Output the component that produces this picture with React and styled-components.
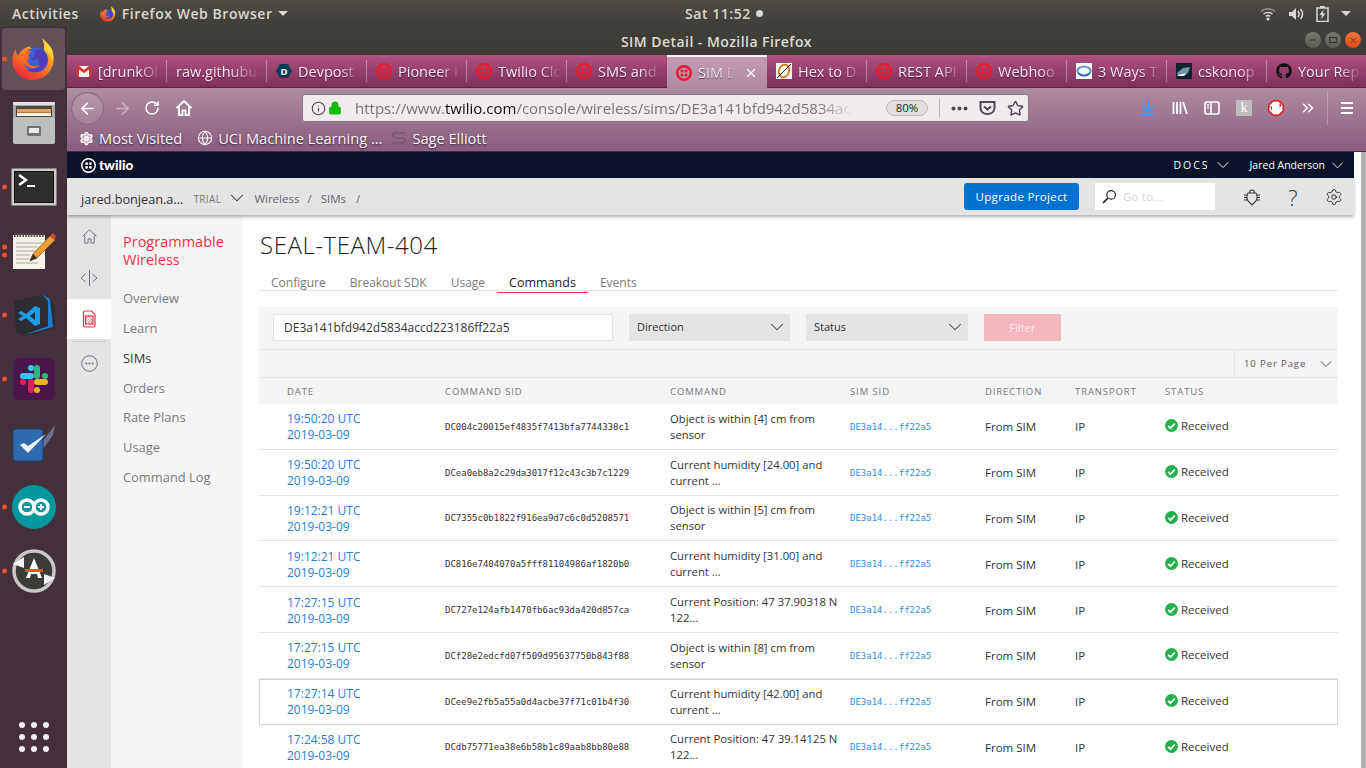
import styled, { createGlobalStyle } from "styled-components";
import { FaGithub } from "react-icons/fa";
import {
  ArrowLeft, ArrowRight, RotateCw, Info, Lock, Star, ChevronDown, Settings, Globe, X,
  ChevronsRight,
} from "lucide-react";

const GlobalStyle = createGlobalStyle`
  html, body { margin: 0; padding: 0; background: #43303a; overflow: hidden; }
  * { box-sizing: border-box; }
  body { font-family: "Open Sans", "Noto Sans", sans-serif; }
`;

const Screen = styled.div`
  width: 1366px;
  height: 768px;
  display: flex;
  flex-direction: column;
  overflow: hidden;
`;

/* ---- gnome top bar ---- */
const TopBar = styled.div`
  height: 27px;
  flex: none;
  display: flex;
  align-items: center;
  background: linear-gradient(#4e4c45, #3f3d38);
  color: #d8d8d2;
  font-size: 14px;
  font-weight: 600;
  letter-spacing: 0.55px;
`;
const TopLeft = styled.div`
  width: 685px;
  display: flex;
  align-items: center;
  padding-left: 12px;
`;
const AppName = styled.span`
  margin: 0 5px 0 6px;
`;
const Activities = styled.span`
  margin-right: 21px;
`;
const Caret = styled.span`
  width: 0;
  height: 0;
  border-left: 5px solid transparent;
  border-right: 5px solid transparent;
  border-top: 5px solid #d8d8d2;
`;
const ClockDot = styled.span`
  width: 7px;
  height: 7px;
  border-radius: 50%;
  background: #d8d8d2;
  margin-left: 5px;
`;
const TrayIcons = styled.div`
  margin-left: auto;
  display: flex;
  align-items: center;
  gap: 12px;
  padding-right: 15px;
`;

const Body = styled.div`
  flex: 1;
  min-height: 0;
  display: flex;
`;

/* ---- launcher ---- */
const Dock = styled.div`
  width: 67px;
  flex: none;
  display: flex;
  flex-direction: column;
  background: #44303a;
`;
const DockItem = styled.div`
  position: relative;
  height: 64px;
  display: flex;
  align-items: center;
  justify-content: center;
  &::before {
    content: "";
    position: absolute;
    inset: 1px 2px 1px 2px;
    border-radius: 4px;
    background: ${(p) => (p.$active ? "rgba(255,255,255,0.16)" : "transparent")};
  }
  & > svg { position: relative; }
`;
const RunDots = styled.div`
  position: absolute;
  left: 2px;
  top: 50%;
  transform: translateY(-50%);
  display: flex;
  flex-direction: column;
  gap: 3px;
`;
const RunDot = styled.span`
  width: 5px;
  height: 5px;
  border-radius: 50%;
  background: #e95420;
`;
const AppGrid = styled.div`
  margin-top: auto;
  margin-bottom: 16px;
  align-self: center;
  display: grid;
  grid-template-columns: repeat(3, 6px);
  gap: 6px;
`;
const AppGridDot = styled.span`
  width: 6px;
  height: 6px;
  border-radius: 50%;
  background: #eeeeee;
`;

/* ---- firefox chrome ---- */
const Browser = styled.div`
  flex: 1;
  min-width: 0;
  display: flex;
  flex-direction: column;
`;
const TitleBar = styled.div`
  position: relative;
  height: 28px;
  flex: none;
  display: flex;
  align-items: center;
  justify-content: center;
  background: linear-gradient(#403f3a, #3c3b36);
  color: #dcdcd5;
  font-size: 14px;
  font-weight: 600;
  letter-spacing: 0.45px;
`;
const WindowButtons = styled.div`
  position: absolute;
  right: 5px;
  top: 5px;
  display: flex;
  gap: 4px;
`;
const WindowButton = styled.span`
  width: 16px;
  height: 16px;
  border-radius: 50%;
  display: flex;
  align-items: center;
  justify-content: center;
  background: ${(p) => (p.$close ? "linear-gradient(#f0703a, #d94e17)" : "linear-gradient(#7a7970, #5b5a53)")};
`;
const TabStrip = styled.div`
  height: 33px;
  flex: none;
  display: flex;
  background: linear-gradient(#b1517f, #7d2f5a);
  border-bottom: 1px solid #5b2443;
`;
const Tab = styled.div`
  position: relative;
  width: 100px;
  flex: none;
  height: ${(p) => (p.$active ? "33px" : "32px")};
  display: flex;
  align-items: center;
  gap: 6px;
  padding-left: 9px;
  color: #f4e9ef;
  font-size: 14.5px;
  text-shadow: 0 1px 1px rgba(50, 10, 30, 0.7);
  background: ${(p) => (p.$active ? "linear-gradient(#c49ab3, #b08ba0)" : "transparent")};
  border-top: ${(p) => (p.$active ? "2px solid #f8eef3" : "0")};
  & > svg { flex: none; }
  &::after {
    content: "";
    position: absolute;
    right: 0;
    top: 5px;
    bottom: 5px;
    width: 1px;
    background: ${(p) => (p.$divider ? "rgba(255,255,255,0.35)" : "transparent")};
  }
`;
const TabLabel = styled.span`
  flex: 1;
  overflow: hidden;
  white-space: nowrap;
  -webkit-mask-image: linear-gradient(to right, #000 60%, transparent 92%);
  mask-image: linear-gradient(to right, #000 60%, transparent 92%);
`;
const TabClose = styled.span`
  display: flex;
  margin-right: 9px;
`;
const Chrome = styled.div`
  flex: none;
  background: linear-gradient(#b08b9f, #8a5c7d);
`;
const NavBar = styled.div`
  height: 40px;
  display: flex;
  align-items: center;
  color: #fff;
`;
const BackCircle = styled.span`
  width: 33px;
  height: 33px;
  margin: 0 2px 0 4px;
  border-radius: 50%;
  border: 1px solid #7f6577;
  display: flex;
  align-items: center;
  justify-content: center;
  background: rgba(255, 255, 255, 0.12);
`;
const NavSlot = styled.span`
  width: ${(p) => p.$w || 32}px;
  display: flex;
  justify-content: center;
  opacity: ${(p) => (p.$dim ? 0.45 : 1)};
`;
const UrlBar = styled.div`
  width: 727px;
  height: 28px;
  margin-left: 100px;
  display: flex;
  align-items: center;
  background: #efebee;
  border: 1px solid #8d7686;
  border-radius: 3px;
  color: #444;
`;
const UrlIcons = styled.span`
  display: flex;
  align-items: center;
  gap: 2px;
  padding-left: 8px;
  width: 52px;
  flex: none;
`;
const UrlText = styled.div`
  width: 527px;
  font-size: 15px;
  color: #777;
  white-space: nowrap;
  overflow: hidden;
  -webkit-mask-image: linear-gradient(to right, #000 88%, transparent 94.5%);
  mask-image: linear-gradient(to right, #000 88%, transparent 94.5%);
  & b { font-weight: 400; color: #111; }
`;
const ZoomPill = styled.span`
  width: 42px;
  height: 16px;
  margin-left: 4px;
  border: 1px solid #bdb8bb;
  background: #e3dfe1;
  border-radius: 8px;
  font-size: 11.5px;
  line-height: 14px;
  text-align: center;
  color: #222;
`;
const UrlSep = styled.span`
  width: 1px;
  height: 20px;
  margin: 0 11px;
  background: #bdb4ba;
`;
const UrlActions = styled.span`
  display: flex;
  align-items: center;
  gap: 11px;
  color: #4a4a4f;
`;
const NavRight = styled.div`
  margin-left: auto;
  display: flex;
  align-items: center;
  padding-right: 3px;
  color: #fff;
`;
const ToolSlot = styled.span`
  width: 32px;
  display: flex;
  justify-content: center;
`;
const ToolSep = styled.span`
  width: 1px;
  height: 33px;
  margin: 0 3px;
  background: rgba(255, 255, 255, 0.25);
`;
const BookmarkBar = styled.div`
  height: 23px;
  display: flex;
  align-items: center;
  padding: 0 0 3px 12px;
  color: #fbf6f9;
  font-size: 14.6px;
  text-shadow: 0 1px 2px rgba(40, 10, 30, 0.8);
`;
const Bookmark = styled.span`
  display: flex;
  align-items: center;
  gap: 5px;
  margin-left: ${(p) => p.$gap || 0}px;
  white-space: nowrap;
`;

/* ---- page ---- */
const Viewport = styled.div`
  flex: 1;
  min-height: 0;
  display: flex;
  border-top: 1px solid #5b2443;
`;
const Page = styled.div`
  flex: 1;
  min-width: 0;
  display: flex;
  flex-direction: column;
  background: #fff;
`;
const Scrollbar = styled.div`
  width: 12px;
  flex: none;
  background: #fff;
  border-right: 5px solid #b0b0b0;
`;
const TwilioBar = styled.div`
  height: 26px;
  flex: none;
  display: flex;
  align-items: center;
  padding: 0 7px 0 14px;
  background: #0d122b;
  color: #fff;
`;
const TwilioName = styled.span`
  font-family: "Lato", sans-serif;
  font-weight: 900;
  font-size: 13.5px;
  margin-left: 3px;
`;
const DocsLink = styled.span`
  margin-left: auto;
  font-size: 10.5px;
  letter-spacing: 2px;
  display: flex;
  align-items: center;
  gap: 3px;
`;
const UserLink = styled.span`
  margin-left: 17px;
  font-size: 10.5px;
  display: flex;
  align-items: center;
  gap: 3px;
`;
const SubBar = styled.div`
  position: relative;
  z-index: 1;
  height: 37px;
  flex: none;
  display: flex;
  align-items: center;
  padding-left: 14px;
  background: #e4e4e4;
  box-shadow: 0 2px 3px rgba(0, 0, 0, 0.3);
`;
const Account = styled.span`
  margin-top: 4px;
  font-size: 12.7px;
  color: #333;
`;
const Trial = styled.span`
  margin: 4px 5px 0 10px;
  font-size: 10px;
  letter-spacing: 0.4px;
  color: #777;
`;
const Crumb = styled.span`
  margin-top: 4px;
  font-size: 11.5px;
  color: #66666f;
  margin-left: ${(p) => p.$gap || 0}px;
`;
const TrialChevron = styled.span`
  display: flex;
  margin-top: 2px;
`;
const UpgradeButton = styled.button`
  margin-left: auto;
  width: 115px;
  height: 27px;
  border: 0;
  border-radius: 3px;
  background: #0071ce;
  color: #fff;
  font-family: inherit;
  font-size: 11.5px;
  letter-spacing: 0.35px;
`;
const GoTo = styled.div`
  width: 120px;
  height: 27px;
  margin-left: 16px;
  display: flex;
  align-items: center;
  gap: 6px;
  padding-left: 7px;
  background: #fff;
  color: #d4d4d4;
  font-size: 11.5px;
  letter-spacing: 0.2px;
`;
const SubIcons = styled.div`
  width: 139px;
  display: flex;
  align-items: center;
  justify-content: space-between;
  padding: 0 11px 0 28px;
  color: #333;
`;
const QuestionMark = styled.span`
  font-size: 22px;
  font-weight: 300;
  line-height: 22px;
  color: #333;
`;
const PageBody = styled.div`
  flex: 1;
  min-height: 0;
  display: flex;
`;
const Rail = styled.div`
  width: 44px;
  flex: none;
  background: #e4e4e4;
  display: flex;
  flex-direction: column;
  align-items: stretch;
`;
const RailItem = styled.div`
  height: ${(p) => p.$h || 40}px;
  display: flex;
  align-items: center;
  justify-content: center;
  color: #6c7080;
  background: ${(p) => (p.$active ? "#fff" : "transparent")};
`;
const RailLine = styled.div`
  height: 1px;
  margin: 2px 5px 0;
  background: #c8c8c8;
`;
const SideNav = styled.div`
  width: 132px;
  flex: none;
  background: #f5f5f5;
  padding: 18px 12px 0;
`;
const SideTitle = styled.div`
  font-size: 14.5px;
  line-height: 18px;
  color: #f22f46;
  margin-bottom: 15px;
`;
const SideItem = styled.div`
  height: 29.85px;
  line-height: 29.85px;
  font-size: 12.9px;
  color: ${(p) => (p.$current ? "#333" : "#7a7a7a")};
  white-space: nowrap;
`;
const Main = styled.div`
  flex: 1;
  min-width: 0;
  padding: 0 16px;
  overflow: hidden;
`;
const Heading = styled.h1`
  margin: 0;
  padding: 15px 0 0 1px;
  height: 59px;
  font-size: 24px;
  line-height: 30px;
  font-weight: 300;
  letter-spacing: 0.55px;
  color: #222;
`;
const TabRow = styled.div`
  display: flex;
  height: 17px;
  border-bottom: 1px solid #e4e4e4;
`;
const PageTab = styled.span`
  position: relative;
  height: 18px;
  padding: 0 12px;
  font-size: ${(p) => (p.$active ? "12.5px" : "12px")};
  line-height: 18px;
  color: ${(p) => (p.$active ? "#222" : "#7a7a7a")};
  &::after {
    content: "";
    display: ${(p) => (p.$active ? "block" : "none")};
    position: absolute;
    left: 0;
    right: 0;
    bottom: -1px;
    height: 1px;
    background: #f22f46;
  }
`;
const FilterPanel = styled.div`
  margin-top: 16px;
  height: 43px;
  display: flex;
  align-items: flex-start;
  gap: 16px;
  padding: 7px 14px 0;
  background: #f5f5f5;
  border-bottom: 1px solid #e4e4e4;
`;
const SidInput = styled.div`
  width: 340px;
  height: 27px;
  padding-left: 10px;
  background: #fff;
  border: 1px solid #e4e4e4;
  font-size: 12px;
  line-height: 25px;
  color: #333;
`;
const Select = styled.div`
  width: ${(p) => p.$w}px;
  height: 27px;
  display: flex;
  align-items: center;
  justify-content: space-between;
  padding: 0 2px 2px 8px;
  background: #e4e4e4;
  font-size: 11px;
  color: #333;
`;
const FilterButton = styled.div`
  width: 77px;
  height: 27px;
  background: #f5b7bf;
  color: #fce9eb;
  font-size: 11px;
  line-height: 27px;
  text-align: center;
`;
const PagerRow = styled.div`
  height: 28px;
  display: flex;
  justify-content: flex-end;
  background: #f5f5f5;
  border-bottom: 1px solid #e4e4e4;
`;
const PerPage = styled.div`
  width: 104px;
  display: flex;
  align-items: center;
  justify-content: space-between;
  padding: 0 2px 0 9px;
  border-left: 1px solid #e4e4e4;
  font-size: 9.5px;
  letter-spacing: 0.9px;
  color: #555;
`;
const columns = "158px 225px 180px 135px 90px 90px 1fr";
const HeadRow = styled.div`
  height: 26px;
  display: grid;
  grid-template-columns: ${columns};
  align-items: center;
  padding-left: 28px;
  background: #f5f5f5;
  font-size: 9.5px;
  letter-spacing: 0.9px;
  color: #777;
`;
const Row = styled.div`
  height: 45.8px;
  display: grid;
  grid-template-columns: ${columns};
  align-items: center;
  padding-left: 28px;
  box-shadow: ${(p) => (p.$focus ? "inset 0 0 0 1px #d4d4d4" : "inset 0 -1px 0 #e4e4e4")};
  font-size: 11.5px;
  color: #333;
`;
const DateCell = styled.div`
  margin-top: 1px;
  font-size: 12px;
  line-height: 16px;
  color: #1f80d8;
`;
const SidCell = styled.div`
  font-family: "DejaVu Sans Mono", monospace;
  font-size: 9px;
  color: ${(p) => (p.$link ? "#2f8fdf" : "#333")};
`;
const CommandCell = styled.div`
  width: 176px;
  font-size: 11.3px;
  line-height: 16px;
`;
const StatusCell = styled.div`
  display: flex;
  align-items: center;
  gap: 3px;
  margin-top: -2px;
`;

/* ---- drawings ---- */
const Firefox = ({ size }) => (
  <svg width={size} height={size} viewBox="0 0 48 48">
    <defs>
      <linearGradient id="ffBase" x1="0.8" y1="0" x2="0.2" y2="1">
        <stop offset="0" stopColor="#ffd43a" />
        <stop offset="0.45" stopColor="#ff8a1f" />
        <stop offset="1" stopColor="#e8203a" />
      </linearGradient>
    </defs>
    <path d="M33 1c3 4 9 8 11 14 4 11 0 23-10 29-11 6-25 3-31-8C-1 28 0 20 4 13c0 4 1 6 3 7 2-5 7-9 13-10-1 1 0 2 2 2 4 0 10 2 13 7 1-6 0-13-2-18z" fill="url(#ffBase)" />
    <circle cx="26" cy="25" r="13.5" fill="#3f5fd6" />
    <path d="M33 14c6 5 8 14 2 20-5 5-13 6-20 2 6 0 11-1 14-5 2-3 1-6-2-7-1 1-5 2-6 0 2-2 5-3 4-6-1-1 0-3 1-4 3-1 5-1 7 0z" fill="#5a2ba8" opacity="0.65" />
    <path d="M10 20c1 6 3 10 8 13 5 2 10 1 13-2-4 2-9 1-12-1-3-3-2-6 0-7-2-2-1-5 3-8-5 0-10 2-12 5z" fill="#ff6a1f" />
    <path d="M33 1c3 4 9 8 11 14 1 4 1 8 0 11-1-6-4-9-9-12 1-4 0-9-2-13z" fill="#ffd43a" />
  </svg>
);
const Files = () => (
  <svg width="44" height="44" viewBox="0 0 44 44">
    <rect x="1" y="1" width="42" height="42" rx="3" fill="#a9abab" />
    <rect x="1" y="1" width="42" height="3" rx="1" fill="#e2e2e2" />
    <rect x="4" y="5" width="36" height="11" fill="#4a4744" />
    <rect x="5" y="8" width="34" height="3" fill="#e8a25a" />
    <rect x="5" y="11" width="34" height="1" fill="#c9753c" />
    <rect x="5" y="12" width="34" height="3" fill="#f4f0e4" />
    <rect x="1" y="16" width="42" height="27" rx="2" fill="#bcbebe" />
    <rect x="15" y="25" width="14" height="10" rx="1.5" fill="#6f7272" />
    <rect x="17" y="27" width="10" height="5" fill="#e9e9e9" />
  </svg>
);
const TerminalIcon = () => (
  <svg width="46" height="38" viewBox="0 0 46 38">
    <rect x="0.5" y="0.5" width="45" height="37" fill="#c9cac5" />
    <rect x="3.5" y="3.5" width="39" height="31" fill="#2d2d2b" stroke="#111" />
    <path d="M8 7l7 5-7 5" fill="none" stroke="#fff" strokeWidth="2.4" />
    <rect x="16" y="17" width="8" height="2" fill="#fff" />
  </svg>
);
const EditorIcon = () => (
  <svg width="46" height="38" viewBox="0 0 46 38">
    <rect x="2" y="3" width="32" height="34" fill="#f5f3ea" />
    <path d="M3 3h31" stroke="#55534c" strokeWidth="4" strokeDasharray="1.6 1.2" />
    <path d="M5 11h26M5 15h22M5 19h24M5 23h14M5 27h16M5 31h22" stroke="#aaa8a0" strokeWidth="1" />
    <path d="M19 29l3-7L39 4l5 4-18 18z" fill="#f0a030" stroke="#8a5a20" strokeWidth="0.8" />
    <path d="M39 4l3-3 3 3-1 4z" fill="#d8473a" />
    <path d="M19 29l3-7 4 4z" fill="#3a3020" />
  </svg>
);
const VsCode = () => (
  <svg width="44" height="44" viewBox="0 0 44 44">
    <path d="M2 8l32-7 9 12v22l-30 8-9-3z" fill="#2c2c32" />
    <path d="M30 1l8 5 3 28-29 8 24-9V8z" fill="#1a7fd0" />
    <path d="M6 20l3-2 5 3 9-8 5 2v16l-5 2-9-8-5 3-3-2 5-3zm17-1l-5 4 5 4z" fill="#1f9ce8" fillRule="evenodd" />
  </svg>
);
const SlackIcon = () => (
  <svg width="42" height="42" viewBox="0 0 42 42">
    <rect width="42" height="42" rx="6" fill="#4a154b" />
    <g strokeWidth="6" strokeLinecap="round" fill="none">
      <path d="M10 18h8M18 10h.01" stroke="#36c5f0" />
      <path d="M24 10v8M32 18h.01" stroke="#2eb67d" />
      <path d="M32 24h-8M24 32h.01" stroke="#ecb22e" />
      <path d="M18 32v-8M10 24h.01" stroke="#e01e5a" />
    </g>
  </svg>
);
const TasksIcon = () => (
  <svg width="46" height="44" viewBox="0 0 46 44">
    <path d="M30 22L44 4l-2 10-10 14z" fill="#7f9cc8" opacity="0.6" />
    <rect x="2" y="8" width="30" height="32" rx="3" fill="#2f6bb0" stroke="#1c3f70" />
    <path d="M9 24l8 8 18-19-18 12-4-3z" fill="#f2f2f2" />
  </svg>
);
const ArduinoIcon = () => (
  <svg width="44" height="44" viewBox="0 0 44 44">
    <circle cx="22" cy="22" r="22" fill="#00979d" />
    <circle cx="15" cy="22" r="7" fill="none" stroke="#fff" strokeWidth="3.4" />
    <circle cx="29" cy="22" r="7" fill="none" stroke="#fff" strokeWidth="3.4" />
    <path d="M12 22h6M26 22h6M29 19v6" stroke="#fff" strokeWidth="1.8" />
  </svg>
);
const UpdaterIcon = () => (
  <svg width="44" height="44" viewBox="0 0 44 44">
    <circle cx="22" cy="22" r="20" fill="#3c3b37" stroke="#c8c8c8" strokeWidth="3.5" />
    <path d="M1 15l11-7v11zM43 29l-11 7V25z" fill="#f4f4f4" />
    <path d="M22 9l-8 20h4l1-4h6l1 4h4z" fill="#fff" />
    <rect x="13" y="20" width="18" height="3" fill="#e95420" />
  </svg>
);
const TwilioMark = ({ size = 16, color = "#e8192e", width = 2.4 }) => (
  <svg width={size} height={size} viewBox="0 0 16 16">
    <circle cx="8" cy="8" r={8 - width / 2} fill="none" stroke={color} strokeWidth={width} />
    <circle cx="6" cy="6" r="1.5" fill={color} />
    <circle cx="10" cy="6" r="1.5" fill={color} />
    <circle cx="6" cy="10" r="1.5" fill={color} />
    <circle cx="10" cy="10" r="1.5" fill={color} />
  </svg>
);
const GmailMark = () => (
  <svg width="16" height="16" viewBox="0 0 16 16">
    <rect x="1" y="3" width="14" height="11" fill="#f1ece8" />
    <path d="M1 3h2l5 4 5-4h2v11h-2V6.5L8 10 3 6.5V14H1z" fill="#d6382c" />
  </svg>
);
const DevpostMark = () => (
  <svg width="16" height="16" viewBox="0 0 16 16">
    <path d="M4 1h8l4 7-4 7H4L0 8z" fill="#003e54" />
    <text x="8" y="11.5" fontSize="9.5" fontWeight="700" fontFamily="Open Sans" textAnchor="middle" fill="#fff">D</text>
  </svg>
);
const HexMark = () => (
  <svg width="16" height="16" viewBox="0 0 16 16">
    <rect width="16" height="16" fill="#f7f7f2" />
    <ellipse cx="8" cy="8" rx="5" ry="6.5" transform="rotate(20 8 8)" fill="none" stroke="#e8701a" strokeWidth="1.8" />
    <path d="M1 15L15 1" stroke="#222" strokeWidth="1" />
  </svg>
);
const WaysMark = () => (
  <svg width="16" height="16" viewBox="0 0 16 16">
    <rect width="16" height="16" fill="#f4f7fb" />
    <ellipse cx="8" cy="8" rx="6.5" ry="4.5" fill="none" stroke="#6f97d4" strokeWidth="2.2" />
    <path d="M2 10c4 4 9 3 12 0" fill="none" stroke="#2f5fa8" strokeWidth="1.4" />
  </svg>
);
const PhotoMark = () => (
  <svg width="16" height="16" viewBox="0 0 16 16">
    <rect width="16" height="16" fill="#0f2230" />
    <path d="M1 10l6-5 7-1-2 6-8 3z" fill="#6f93ad" />
    <path d="M1 12l10-2-3 3H2z" fill="#e8eef2" />
  </svg>
);
const Wifi = () => (
  <svg width="16" height="14" viewBox="0 0 16 14" fill="none" stroke="#d8d8d2" strokeWidth="1.6">
    <path d="M1 4.5c4-3.5 10-3.5 14 0" opacity="0.5" />
    <path d="M3.5 7c2.5-2 6.5-2 9 0" />
    <path d="M5.8 9.3c1.3-1 3.1-1 4.4 0" />
    <circle cx="8" cy="12" r="1.5" fill="#d8d8d2" stroke="none" />
  </svg>
);
const Sound = () => (
  <svg width="16" height="14" viewBox="0 0 16 14">
    <path d="M1 5h3l4-4v12l-4-4H1z" fill="#d8d8d2" />
    <path d="M10 4c1.5 2 1.5 4 0 6M12.5 2c2.5 3 2.5 7 0 10" fill="none" stroke="#d8d8d2" strokeWidth="1.5" />
  </svg>
);
const Battery = () => (
  <svg width="13" height="16" viewBox="0 0 13 16">
    <rect x="4" y="0" width="5" height="2" fill="#d8d8d2" />
    <rect x="1" y="2" width="11" height="13.5" fill="none" stroke="#d8d8d2" strokeWidth="1.5" />
    <path d="M7.5 3.5L3.5 9h2.5l-1 4.5L9.5 7.5H7z" fill="#d8d8d2" />
  </svg>
);
const HomeOutline = ({ color = "#fff", size = 18, weight = 1.8 }) => (
  <svg width={size} height={size} viewBox="0 0 18 18" fill="none" stroke={color} strokeWidth={weight}>
    <path d="M1.5 9L9 2l7.5 7M4 7.5V16h3.5v-4.5h3V16H14V7.5" />
  </svg>
);
const Pocket = () => (
  <svg width="17" height="16" viewBox="0 0 17 16" fill="none" stroke="#4a4a4f" strokeWidth="2">
    <path d="M1.5 2h14v6c0 3.5-3 6-7 6s-7-2.5-7-6z" />
    <path d="M5 6.5l3.5 3 3.5-3" />
  </svg>
);
const DownloadArrow = () => (
  <svg width="14" height="16" viewBox="0 0 14 16" fill="none" stroke="#3d9bff" strokeWidth="2">
    <path d="M7 0v11M1.5 6L7 11.5 12.5 6M0 15h14" />
  </svg>
);
const Library = () => (
  <svg width="16" height="16" viewBox="0 0 16 16" stroke="#fff" strokeWidth="1.8">
    <path d="M1.5 2v12M5 2v12M8.5 2v12M11 2l4 12" />
  </svg>
);
const SidebarIcon = () => (
  <svg width="16" height="14" viewBox="0 0 16 14" fill="none" stroke="#fff" strokeWidth="1.6">
    <rect x="1" y="1" width="14" height="12" rx="2" />
    <path d="M7 1v12M3 4h2M3 6.5h2" />
  </svg>
);
const KTile = styled.span`
  width: 16px;
  height: 16px;
  border-radius: 1px;
  background: #c0bcbe;
  color: #fff;
  font-family: "Liberation Serif", serif;
  font-size: 14px;
  line-height: 15px;
  text-align: center;
`;
const StopHand = () => (
  <svg width="16" height="16" viewBox="0 0 16 16">
    <path d="M5 0h6l5 5v6l-5 5H5l-5-5V5z" fill="#e01414" />
    <path d="M5.5 1.5h5l4 4v5l-4 4h-5l-4-4v-5z" fill="#fff" />
    <path d="M11.5 3l2 2.500-2 2zM2 6l2 1v4z" fill="#e01414" />
  </svg>
);
const Burger = () => (
  <svg width="14" height="12" viewBox="0 0 14 12" stroke="#fff" strokeWidth="2">
    <path d="M1 1h12M1 6h12M1 11h12" />
  </svg>
);
const SageMark = () => (
  <svg width="16" height="12" viewBox="0 0 16 12" fill="none" stroke="#6f5566" strokeWidth="1.2">
    <path d="M15 1H4L1 3l3 3h8l3 3-3 2H1" />
  </svg>
);
const Chevron = ({ size = 16, color = "#444" }) => <ChevronDown size={size} color={color} strokeWidth={1.1} />;
const BugIcon = () => (
  <svg width="18" height="18" viewBox="0 0 18 18" fill="none" stroke="#333" strokeWidth="1.1">
    <path d="M5 5h8c1.5 2 1.5 6 0 8l-4 4-4-4c-1.5-2-1.5-6 0-8zM6.5 5c0-4 5-4 5 0M1 7h3M14 7h3M1 9.5h3M14 9.5h3M1 12h3M14 12h3" />
  </svg>
);
const Loupe = () => (
  <svg width="15" height="15" viewBox="0 0 14 14" fill="none" stroke="#222" strokeWidth="1.1">
    <circle cx="8.5" cy="5.5" r="4" />
    <path d="M5.5 8.5L1 13" strokeWidth="1.5" />
  </svg>
);
const CodeIcon = () => (
  <svg width="18" height="18" viewBox="0 0 18 18" fill="none" stroke="#6c7080" strokeWidth="1">
    <path d="M5.5 5L1 9l4.5 4M12.5 5L17 9l-4.5 4M9.5 1v16" />
  </svg>
);
const SimIcon = () => (
  <svg width="14" height="18" viewBox="0 0 14 18" fill="none" stroke="#f22f46" strokeWidth="1.2">
    <path d="M3 1h6.5L13 4.5V15.500a1.500 1.500 0 0 1-1.500 1.500h-8.500A1.500 1.500 0 0 1 1.500 15.500V2.500A1.500 1.500 0 0 1 3 1z" />
    <rect x="3.5" y="6" width="7.5" height="8" />
    <path d="M3.5 6l7.5 8M3.5 9l5 5M6.5 6l4.500 5" strokeWidth="0.8" />
  </svg>
);
const MoreIcon = () => (
  <svg width="17" height="17" viewBox="0 0 17 17" fill="none" stroke="#6c7080" strokeWidth="1">
    <circle cx="8.5" cy="8.5" r="7.8" />
    <circle cx="5.3" cy="8.5" r="1" fill="#6c7080" stroke="none" />
    <circle cx="8.5" cy="8.5" r="1" fill="#6c7080" stroke="none" />
    <circle cx="11.7" cy="8.5" r="1" fill="#6c7080" stroke="none" />
  </svg>
);
const CheckBadge = () => (
  <svg width="13" height="13" viewBox="0 0 13 13">
    <circle cx="6.5" cy="6.5" r="6.5" fill="#23b14d" />
    <path d="M3.2 6.8l2.3 2.3 4.3-4.6" fill="none" stroke="#fff" strokeWidth="1.8" />
  </svg>
);

const dockApps = [
  { key: "firefox", icon: <Firefox size={44} />, dots: 1, active: true },
  { key: "files", icon: <Files />, dots: 0 },
  { key: "terminal", icon: <TerminalIcon />, dots: 1 },
  { key: "editor", icon: <EditorIcon />, dots: 2 },
  { key: "code", icon: <VsCode />, dots: 1 },
  { key: "slack", icon: <SlackIcon />, dots: 1 },
  { key: "tasks", icon: <TasksIcon />, dots: 0 },
  { key: "arduino", icon: <ArduinoIcon />, dots: 1 },
  { key: "updater", icon: <UpdaterIcon />, dots: 1 },
];

const tabs = [
  { label: "[drunkOl", icon: <GmailMark /> },
  { label: "raw.githubu" },
  { label: "Devpost", icon: <DevpostMark /> },
  { label: "Pioneer I", icon: <TwilioMark /> },
  { label: "Twilio Clo", icon: <TwilioMark /> },
  { label: "SMS and", icon: <TwilioMark />, hideDivider: true },
  { label: "SIM D", icon: <TwilioMark />, active: true },
  { label: "Hex to D", icon: <HexMark /> },
  { label: "REST API", icon: <TwilioMark /> },
  { label: "Webhoo", icon: <TwilioMark /> },
  { label: "3 Ways T", icon: <WaysMark /> },
  { label: "cskonop", icon: <PhotoMark /> },
  { label: "Your Rep", icon: <FaGithub size={16} color="#111" /> },
];

const sideItems = ["Overview", "Learn", "SIMs", "Orders", "Rate Plans", "Usage", "Command Log"];
const pageTabs = ["Configure", "Breakout SDK", "Usage", "Commands", "Events"];

const rows = [
  ["19:50:20 UTC", "DC004c20015ef4835f7413bfa7744338c1", "Object is within [4] cm from sensor"],
  ["19:50:20 UTC", "DCea0eb8a2c29da3017f12c43c3b7c1229", "Current humidity [24.00] and current ..."],
  ["19:12:21 UTC", "DC7355c0b1822f916ea9d7c6c0d5208571", "Object is within [5] cm from sensor"],
  ["19:12:21 UTC", "DC816e7404070a5fff81104986af1820b0", "Current humidity [31.00] and current ..."],
  ["17:27:15 UTC", "DC727e124afb1470fb6ac93da420d857ca", "Current Position: 47 37.90318 N 122..."],
  ["17:27:15 UTC", "DCf28e2edcfd07f509d95637750b843f88", "Object is within [8] cm from sensor"],
  ["17:27:14 UTC", "DCee9e2fb5a55a0d4acbe37f71c01b4f30", "Current humidity [42.00] and current ..."],
  ["17:24:58 UTC", "DCdb75771ea38e6b58b1c89aab8bb80e88", "Current Position: 47 39.14125 N 122..."],
];

export default function App() {
  return (
    <Screen>
      <GlobalStyle />
      <TopBar>
        <TopLeft>
          <Activities>Activities</Activities>
          <Firefox size={16} />
          <AppName>Firefox Web Browser</AppName>
          <Caret />
        </TopLeft>
        <span>Sat 11:52</span>
        <ClockDot />
        <TrayIcons>
          <Wifi />
          <Sound />
          <Battery />
          <Caret />
        </TrayIcons>
      </TopBar>
      <Body>
        <Dock>
          {dockApps.map((app) => (
            <DockItem key={app.key} $active={app.active}>
              {app.icon}
              {app.dots > 0 && (
                <RunDots>
                  {Array.from({ length: app.dots }).map((_, i) => (
                    <RunDot key={i} />
                  ))}
                </RunDots>
              )}
            </DockItem>
          ))}
          <AppGrid>
            {Array.from({ length: 9 }).map((_, i) => (
              <AppGridDot key={i} />
            ))}
          </AppGrid>
        </Dock>
        <Browser>
          <TitleBar>
            SIM Detail - Mozilla Firefox
            <WindowButtons>
              <WindowButton>
                <svg width="8" height="8"><path d="M1 4h6" stroke="#33332f" strokeWidth="1" /></svg>
              </WindowButton>
              <WindowButton>
                <svg width="8" height="8"><rect x="0.5" y="1.5" width="7" height="5" fill="none" stroke="#33332f" /></svg>
              </WindowButton>
              <WindowButton $close>
                <X size={9} color="#5a2410" strokeWidth={2} />
              </WindowButton>
            </WindowButtons>
          </TitleBar>
          <TabStrip>
            {tabs.map((t) => (
              <Tab key={t.label} $active={t.active} $divider={!t.active && !t.hideDivider}>
                {t.icon}
                <TabLabel>{t.label}</TabLabel>
                {t.active && (
                  <TabClose>
                    <X size={14} color="#fff" strokeWidth={2} />
                  </TabClose>
                )}
              </Tab>
            ))}
          </TabStrip>
          <Chrome>
            <NavBar>
              <BackCircle>
                <ArrowLeft size={19} color="#fff" strokeWidth={2} />
              </BackCircle>
              <NavSlot $dim $w={32}>
                <ArrowRight size={19} color="#fff" strokeWidth={2} />
              </NavSlot>
              <NavSlot $w={28}>
                <RotateCw size={16} color="#fff" strokeWidth={2.2} />
              </NavSlot>
              <NavSlot $w={36}>
                <HomeOutline />
              </NavSlot>
              <UrlBar>
                <UrlIcons>
                  <Info size={15} color="#4a4a4f" strokeWidth={1.8} />
                  <Lock size={14} color="#12bc00" fill="#12bc00" strokeWidth={2} />
                </UrlIcons>
                <UrlText>
                  https://www.<b>twilio.com</b>/console/wireless/sims/DE3a141bfd942d5834acc
                </UrlText>
                <ZoomPill>80%</ZoomPill>
                <UrlSep />
                <UrlActions>
                  <svg width="17" height="5" viewBox="0 0 17 5" fill="#4a4a4f">
                    <circle cx="2.5" cy="2.5" r="2" />
                    <circle cx="8.5" cy="2.5" r="2" />
                    <circle cx="14.5" cy="2.5" r="2" />
                  </svg>
                  <Pocket />
                  <Star size={17} color="#4a4a4f" strokeWidth={2} />
                </UrlActions>
              </UrlBar>
              <NavRight>
                <ToolSlot>
                  <DownloadArrow />
                </ToolSlot>
                <ToolSlot>
                  <Library />
                </ToolSlot>
                <ToolSlot>
                  <SidebarIcon />
                </ToolSlot>
                <ToolSlot>
                  <KTile>k</KTile>
                </ToolSlot>
                <ToolSlot>
                  <StopHand />
                </ToolSlot>
                <ToolSlot>
                  <ChevronsRight size={18} color="#fff" strokeWidth={2} />
                </ToolSlot>
                <ToolSep />
                <ToolSlot>
                  <Burger />
                </ToolSlot>
              </NavRight>
            </NavBar>
            <BookmarkBar>
              <Bookmark>
                <Settings size={15} color="#fff" fill="#fff" fillOpacity={0.5} strokeWidth={2} />
                Most Visited
              </Bookmark>
              <Bookmark $gap={15}>
                <Globe size={16} color="#fff" strokeWidth={1.6} />
                UCI Machine Learning ...
              </Bookmark>
              <Bookmark $gap={9}>
                <SageMark />
                Sage Elliott
              </Bookmark>
            </BookmarkBar>
          </Chrome>
          <Viewport>
            <Page>
              <TwilioBar>
                <TwilioMark size={15} color="#fff" width={1.6} />
                <TwilioName>twilio</TwilioName>
                <DocsLink>
                  DOCS
                  <Chevron size={20} color="#fff" />
                </DocsLink>
                <UserLink>
                  Jared Anderson
                  <Chevron size={19} color="#fff" />
                </UserLink>
              </TwilioBar>
              <SubBar>
                <Account>jared.bonjean.a...</Account>
                <Trial>TRIAL</Trial>
                <TrialChevron>
                  <Chevron size={22} color="#333" />
                </TrialChevron>
                <Crumb $gap={6}>Wireless</Crumb>
                <Crumb $gap={8}>/</Crumb>
                <Crumb $gap={9}>SIMs</Crumb>
                <Crumb $gap={10}>/</Crumb>
                <UpgradeButton>Upgrade Project</UpgradeButton>
                <GoTo>
                  <Loupe />
                  Go to...
                </GoTo>
                <SubIcons>
                  <BugIcon />
                  <QuestionMark>?</QuestionMark>
                  <Settings size={18} color="#222" strokeWidth={1.2} />
                </SubIcons>
              </SubBar>
              <PageBody>
                <Rail>
                  <RailItem $h={42}>
                    <HomeOutline color="#6c7080" size={17} weight={1} />
                  </RailItem>
                  <RailItem $h={42}>
                    <CodeIcon />
                  </RailItem>
                  <RailItem $active $h={40}>
                    <SimIcon />
                  </RailItem>
                  <RailLine />
                  <RailItem $h={42}>
                    <MoreIcon />
                  </RailItem>
                </Rail>
                <SideNav>
                  <SideTitle>Programmable Wireless</SideTitle>
                  {sideItems.map((s) => (
                    <SideItem key={s} $current={s === "SIMs"}>
                      {s}
                    </SideItem>
                  ))}
                </SideNav>
                <Main>
                  <Heading>SEAL-TEAM-404</Heading>
                  <TabRow>
                    {pageTabs.map((t) => (
                      <PageTab key={t} $active={t === "Commands"}>
                        {t}
                      </PageTab>
                    ))}
                  </TabRow>
                  <FilterPanel>
                    <SidInput>DE3a141bfd942d5834accd223186ff22a5</SidInput>
                    <Select $w={161}>
                      Direction
                      <Chevron size={22} />
                    </Select>
                    <Select $w={162}>
                      Status
                      <Chevron size={22} />
                    </Select>
                    <FilterButton>Filter</FilterButton>
                  </FilterPanel>
                  <PagerRow>
                    <PerPage>
                      10 Per Page
                      <Chevron size={20} />
                    </PerPage>
                  </PagerRow>
                  <HeadRow>
                    <span>DATE</span>
                    <span>COMMAND SID</span>
                    <span>COMMAND</span>
                    <span>SIM SID</span>
                    <span>DIRECTION</span>
                    <span>TRANSPORT</span>
                    <span>STATUS</span>
                  </HeadRow>
                  {rows.map(([time, sid, command], i) => (
                    <Row key={sid} $focus={i === 6}>
                      <DateCell>
                        {time}
                        <br />
                        2019-03-09
                      </DateCell>
                      <SidCell>{sid}</SidCell>
                      <CommandCell>{command}</CommandCell>
                      <SidCell $link>DE3a14...ff22a5</SidCell>
                      <span>From SIM</span>
                      <span>IP</span>
                      <StatusCell>
                        <CheckBadge />
                        Received
                      </StatusCell>
                    </Row>
                  ))}
                </Main>
              </PageBody>
            </Page>
            <Scrollbar />
          </Viewport>
        </Browser>
      </Body>
    </Screen>
  );
}
